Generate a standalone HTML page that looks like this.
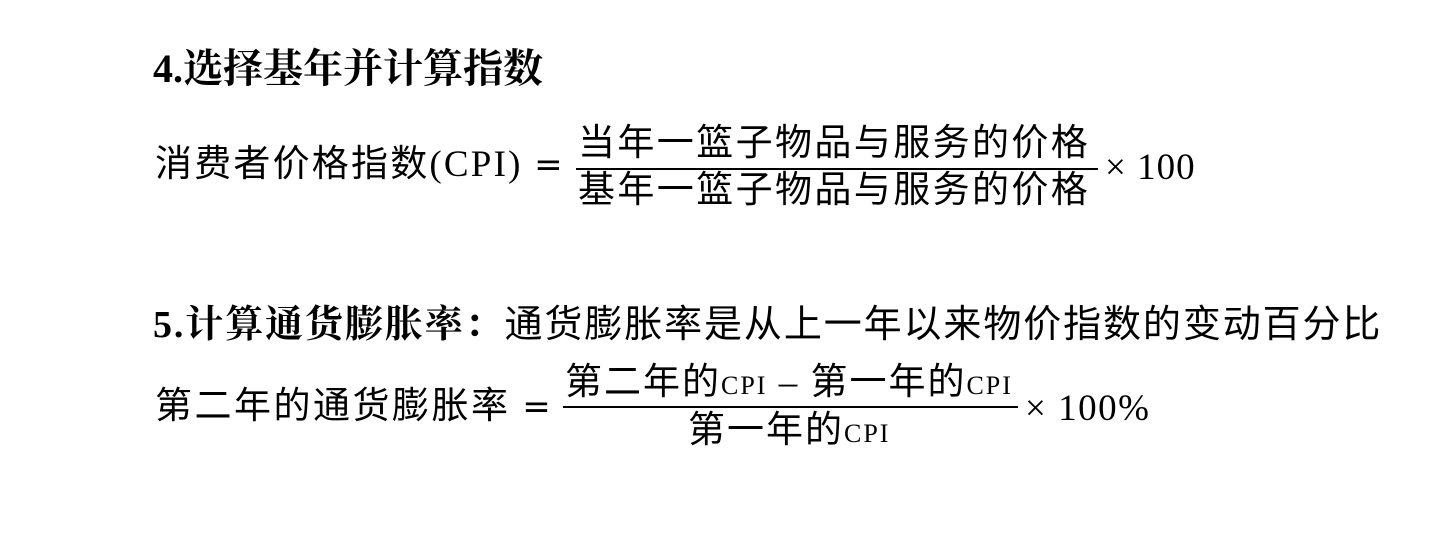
<!DOCTYPE html>
<html><head><meta charset="utf-8"><style>
body{margin:0;width:1430px;height:535px;background:#fff;position:relative;overflow:hidden;font-family:"Liberation Serif","Noto Serif CJK SC",serif;color:#000}
.a{position:absolute;white-space:nowrap;line-height:1}
.s{font-family:"Liberation Serif","Noto Sans CJK SC",sans-serif}
.b{font-weight:bold}
.bar{position:absolute;height:2px;background:#000}
.eq{font-family:"DejaVu Sans",sans-serif;font-size:34px}
</style></head><body>
<div class="a b" style="left:153px;top:49px;font-size:40px">4.选择基年并计算指数</div>

<div class="a s" style="left:155px;top:146px;font-size:37px;letter-spacing:2.2px">消费者价格指数(CPI) <span class="eq">=</span></div>
<div class="a s" style="left:578px;top:125px;font-size:37px;letter-spacing:2.4px">当年一篮子物品与服务的价格</div>
<div class="bar" style="left:576px;top:168px;width:522px"></div>
<div class="a s" style="left:578px;top:172px;font-size:37px;letter-spacing:2.4px">基年一篮子物品与服务的价格</div>
<div class="a s" style="left:1105px;top:149px;font-size:37px;letter-spacing:1px">× 100</div>

<div class="a" style="left:153px;top:306px;font-size:38px;letter-spacing:1.9px"><b>5.计算通货膨胀率：</b><span class="s">通货膨胀率是从上一年以来物价指数的变动百分比</span></div>

<div class="a s" style="left:155px;top:388px;font-size:37px;letter-spacing:2.5px">第二年的通货膨胀率 <span class="eq">=</span></div>
<div class="a s" style="left:565px;top:364px;font-size:37px;letter-spacing:2px">第二年的<span style="font-size:26px">CPI</span> – 第一年的<span style="font-size:26px">CPI</span></div>
<div class="bar" style="left:563px;top:406px;width:455px"></div>
<div class="a s" style="left:688px;top:412px;font-size:37px;letter-spacing:2px">第一年的<span style="font-size:26px">CPI</span></div>
<div class="a s" style="left:1025px;top:390px;font-size:37px;letter-spacing:1.5px">× 100%</div>
</body></html>
